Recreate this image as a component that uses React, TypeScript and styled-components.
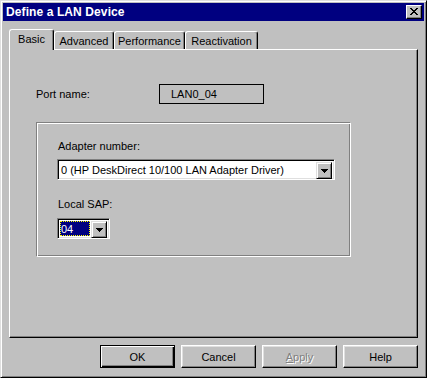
import { createGlobalStyle, styled } from 'styled-components'

const GlobalStyle = createGlobalStyle`
    html, body {
        margin: 0;
        background: #ffffff;
    }
    body {
        font-family: "Liberation Sans", Arial, sans-serif;
        font-size: 11px;
        color: #000000;
    }
`

const Window = styled.div`
    width: 427px;
    height: 378px;
    box-sizing: border-box;
    background: #c0c0c0;
    border: 1px solid;
    border-color: #dfdfdf #000000 #000000 #dfdfdf;
    box-shadow: inset 1px 1px #ffffff, inset -1px -1px #808080;
    padding: 2px;
    display: flex;
    flex-direction: column;
`

const TitleBar = styled.div`
    height: 18px;
    background: #000080;
    display: flex;
    align-items: center;
    justify-content: space-between;
    padding: 0 2px 0 3px;
`

const TitleText = styled.span`
    color: #ffffff;
    font-weight: bold;
    font-size: 12px;
    letter-spacing: 0.1px;
`

const CloseButton = styled.div`
    width: 16px;
    height: 14px;
    box-sizing: border-box;
    background: #c0c0c0;
    border: 1px solid;
    border-color: #ffffff #000000 #000000 #ffffff;
    box-shadow: inset -1px -1px #808080;
    display: flex;
    align-items: center;
    justify-content: center;
    padding: 0 1px 1px 0;
`

const Body = styled.div`
    flex: 1;
    display: flex;
    flex-direction: column;
    padding: 8px 6px 7px 6px;
`

const TabStrip = styled.div`
    height: 20px;
    display: flex;
    align-items: flex-end;
    position: relative;
    z-index: 1;
`

const Tab = styled.div<{ $active?: boolean; $w: number }>`
    width: ${p => p.$w}px;
    height: ${p => (p.$active ? 21 : 18)}px;
    margin-bottom: ${p => (p.$active ? -1 : 0)}px;
    box-sizing: border-box;
    background: #c0c0c0;
    border-left: 1px solid #ffffff;
    border-top: 1px solid #ffffff;
    border-right: 1px solid #000000;
    border-radius: 3px 3px 0 0;
    box-shadow: inset -1px 0 #808080;
    display: flex;
    align-items: center;
    justify-content: center;
    padding-bottom: ${p => (p.$active ? 2 : 0)}px;
`

const Panel = styled.div`
    height: 289px;
    box-sizing: border-box;
    border: 1px solid;
    border-color: #ffffff #000000 #000000 #ffffff;
    box-shadow: inset -1px -1px #808080;
    display: flex;
    flex-direction: column;
    padding-left: 26px;
`

const PortRow = styled.div`
    margin-top: 34px;
    height: 20px;
    display: flex;
    align-items: center;
`

const PortLabel = styled.span`
    width: 123px;
`

const PortBox = styled.div`
    width: 105px;
    height: 20px;
    box-sizing: border-box;
    border: 1px solid #000000;
    display: flex;
    align-items: center;
    padding-left: 11px;
`

const GroupBox = styled.div`
    margin-top: 18px;
    width: 315px;
    height: 135px;
    box-sizing: border-box;
    border: 1px solid;
    border-color: #808080 #ffffff #ffffff #808080;
    box-shadow: inset 1px 1px #ffffff, inset -1px -1px #808080;
    padding: 17px 0 0 20px;
    display: flex;
    flex-direction: column;
`

const FieldLabel = styled.div<{ $top?: number }>`
    line-height: 13px;
    height: 13px;
    margin-top: ${p => p.$top ?? 0}px;
    padding-left: 1px;
`

const Combo = styled.div<{ $w: number; $top: number }>`
    width: ${p => p.$w}px;
    height: 21px;
    margin-top: ${p => p.$top}px;
    box-sizing: border-box;
    background: #ffffff;
    border: 1px solid;
    border-color: #808080 #ffffff #ffffff #808080;
    box-shadow: inset 1px 1px #000000, inset -1px -1px #dfdfdf;
    padding: 2px;
    display: flex;
`

const ComboText = styled.div<{ $selected?: boolean }>`
    flex: 1;
    display: flex;
    align-items: center;
    padding-left: 1px;
    box-sizing: border-box;
    white-space: nowrap;
    background: ${p => (p.$selected ? '#000080' : 'transparent')};
    color: ${p => (p.$selected ? '#ffffff' : '#000000')};
    outline: ${p => (p.$selected ? '1px dotted #ffff00' : 'none')};
    outline-offset: -1px;
    margin-right: ${p => (p.$selected ? 1 : 0)}px;
`

const DropButton = styled.div`
    width: 16px;
    height: 17px;
    box-sizing: border-box;
    background: #c0c0c0;
    border: 1px solid;
    border-color: #dfdfdf #000000 #000000 #dfdfdf;
    box-shadow: inset 1px 1px #ffffff, inset -1px -1px #808080;
    display: flex;
    align-items: center;
    justify-content: center;
`

const ButtonRow = styled.div`
    margin-top: 7px;
    display: flex;
    justify-content: flex-end;
    gap: 6px;
`

const Button = styled.div<{ $default?: boolean; $disabled?: boolean }>`
    width: 75px;
    height: 23px;
    box-sizing: border-box;
    background: #c0c0c0;
    border: 1px solid;
    border-color: ${p => (p.$default ? '#000000' : '#ffffff #000000 #000000 #ffffff')};
    box-shadow: ${p => (p.$default
        ? 'inset 1px 1px #ffffff, inset -1px -1px #000000, inset -2px -2px #808080'
        : 'inset -1px -1px #808080, inset 1px 1px #dfdfdf')};
    display: flex;
    align-items: center;
    justify-content: center;
    color: ${p => (p.$disabled ? '#808080' : '#000000')};
    text-shadow: ${p => (p.$disabled ? '1px 1px #ffffff' : 'none')};
`

function CloseGlyph() {
    return (
        <svg width='8' height='7' viewBox='0 0 8 7' shapeRendering='crispEdges'>
            <path
                fill='#000'
                d='M0 0h2v1H0zM6 0h2v1H6zM1 1h2v1H1zM5 1h2v1H5zM2 2h4v1H2zM3 3h2v1H3zM2 4h4v1H2zM1 5h2v1H1zM5 5h2v1H5zM0 6h2v1H0zM6 6h2v1H6z'
            />
        </svg>
    )
}

function ArrowGlyph() {
    return (
        <svg width='7' height='4' viewBox='0 0 7 4' shapeRendering='crispEdges'>
            <path fill='#000' d='M0 0h7v1H0zM1 1h5v1H1zM2 2h3v1H2zM3 3h1v1H3z' />
        </svg>
    )
}

const tabs = [
    { label: 'Basic',        w: 45, active: true },
    { label: 'Advanced',     w: 60 },
    { label: 'Performance',  w: 71 },
    { label: 'Reactivation', w: 73 },
]

export default function App() {
    return (
        <>
            <GlobalStyle />
            <Window>
                <TitleBar>
                    <TitleText>Define a LAN Device</TitleText>
                    <CloseButton><CloseGlyph /></CloseButton>
                </TitleBar>

                <Body>
                    {/* ======== TABS ======== */}
                    <TabStrip>
                        {tabs.map(t => (
                            <Tab key={t.label} $w={t.w} $active={t.active}>{t.label}</Tab>
                        ))}
                    </TabStrip>

                    {/* ======== PAGE ======== */}
                    <Panel>
                        <PortRow>
                            <PortLabel>Port name:</PortLabel>
                            <PortBox>LAN0_04</PortBox>
                        </PortRow>

                        <GroupBox>
                            <FieldLabel>Adapter number:</FieldLabel>
                            <Combo $w={278} $top={6}>
                                <ComboText>0 (HP DeskDirect 10/100 LAN Adapter Driver)</ComboText>
                                <DropButton><ArrowGlyph /></DropButton>
                            </Combo>

                            <FieldLabel $top={18}>Local SAP:</FieldLabel>
                            <Combo $w={53} $top={7}>
                                <ComboText $selected>04</ComboText>
                                <DropButton><ArrowGlyph /></DropButton>
                            </Combo>
                        </GroupBox>
                    </Panel>

                    {/* ======== BUTTONS ======== */}
                    <ButtonRow>
                        <Button $default>OK</Button>
                        <Button>Cancel</Button>
                        <Button $disabled><span><u>A</u>pply</span></Button>
                        <Button>Help</Button>
                    </ButtonRow>
                </Body>
            </Window>
        </>
    )
}
